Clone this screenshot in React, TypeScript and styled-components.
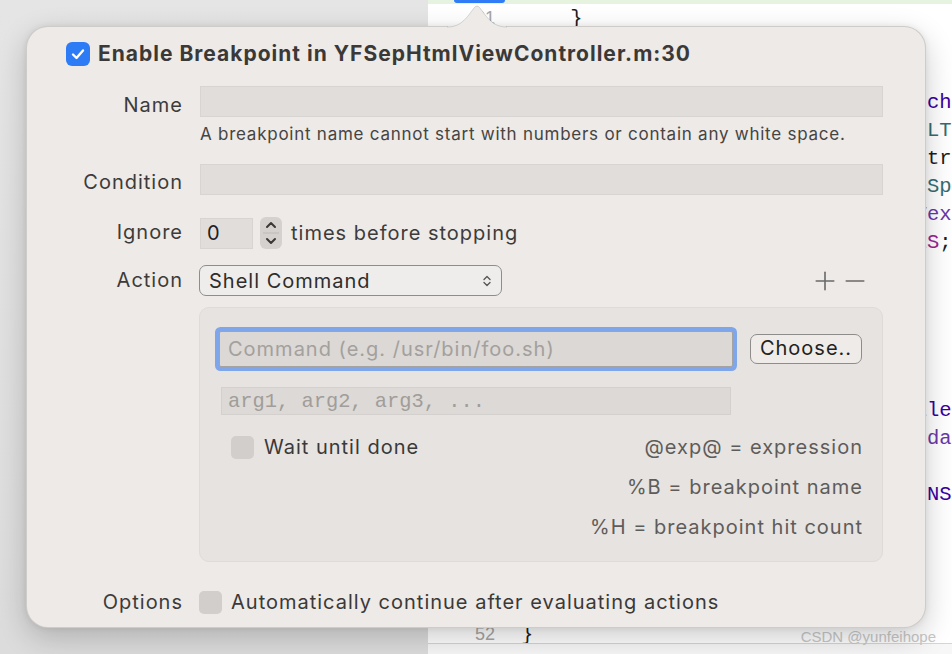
import React from 'react';
import styled, { createGlobalStyle } from 'styled-components';
import { Plus, Minus } from 'lucide-react';

const GlobalStyle = createGlobalStyle`
  html, body {
    margin: 0;
    padding: 0;
  }
  body {
    width: 952px;
    height: 654px;
    overflow: hidden;
    font-family: Inter, "Noto Sans", sans-serif;
  }
`;

const Screen = styled.div`
  position: relative;
  width: 952px;
  height: 654px;
  display: flex;
  overflow: hidden;
`;

const Sidebar = styled.div`
  width: 428px;
  flex-shrink: 0;
  background: linear-gradient(180deg, #e5e5e5 0%, #dcdcdc 100%);
`;

const Editor = styled.div`
  flex: 1;
  display: flex;
  flex-direction: column;
  background: #ffffff;
`;

const EditorBody = styled.div`
  height: 643px;
  overflow: hidden;
  flex-shrink: 0;
`;

const CurrentLine = styled.div`
  height: 4px;
  background: #e6f4df;
  display: flex;
  align-items: flex-start;
`;

const BreakpointMarker = styled.span`
  margin-left: 26px;
  width: 51px;
  height: 3px;
  background: #2f7cf6;
  border-radius: 0 0 4px 4px;
`;

const CodeRow = styled.div`
  display: grid;
  grid-template-columns: 67px 1fr;
  column-gap: 26px;
  height: 28px;
  align-items: center;
`;

const LineNo = styled.span`
  text-align: right;
  font-family: "Liberation Sans Narrow", "Liberation Sans", sans-serif;
  font-size: 18px;
  color: #a6a6a6;
`;

const Code = styled.span`
  font-family: "Liberation Mono", monospace;
  font-size: 20.5px;
  white-space: pre;
  color: #1d1d1d;
`;

const EditorFooter = styled.div`
  flex: 1;
  border-top: 1px solid #d6d6d6;
  background: #f7f7f7;
`;

const Watermark = styled.div`
  position: absolute;
  right: 16px;
  bottom: 9px;
  font-family: "Liberation Sans", sans-serif;
  font-size: 15px;
  color: #c8c8c8;
`;

/* popover */

const Popover = styled.div`
  position: absolute;
  left: 26px;
  top: 26px;
  width: 900px;
  height: 602px;
  box-sizing: border-box;
  background: #edeae7;
  border: 1px solid rgba(0, 0, 0, 0.13);
  border-radius: 22px;
  box-shadow: 0 10px 30px rgba(0, 0, 0, 0.2), 0 0 6px rgba(0, 0, 0, 0.08);
  color: #3d3b3a;
  letter-spacing: 1px;
`;

const Arrow = styled.svg`
  position: absolute;
  left: 420px;
  top: -24px;
`;

const Header = styled.div`
  display: flex;
  align-items: center;
  gap: 8px;
  padding: 15px 0 0 39px;
`;

const BlueCheck = styled.span`
  width: 24px;
  height: 24px;
  border-radius: 6px;
  background: #2d7cf6;
  display: flex;
  align-items: center;
  justify-content: center;
`;

const Title = styled.div`
  font-size: 21px;
  font-weight: 700;
  color: #3a3938;
  line-height: 24px;
  letter-spacing: 1px;
`;

const FieldRow = styled.div<{ $gap: number }>`
  display: flex;
  align-items: flex-start;
  margin-top: ${({ $gap }) => $gap}px;
`;

const Label = styled.div<{ $offset?: number; $lh?: number }>`
  width: 156px;
  flex-shrink: 0;
  margin-right: 17px;
  text-align: right;
  font-size: 20px;
  line-height: ${({ $lh }) => $lh || 31}px;
  padding-top: ${({ $offset }) => $offset || 0}px;
`;

const Control = styled.div`
  width: 683px;
  display: flex;
  flex-direction: column;
`;

const Inline = styled.div`
  display: flex;
  align-items: center;
`;

const TextBox = styled.div<{ $w?: number }>`
  box-sizing: border-box;
  width: ${({ $w }) => ($w ? `${$w}px` : '100%')};
  height: 31px;
  background: #e0dddb;
  border: 1px solid #d7d4d1;
  font-size: 20px;
  line-height: 29px;
  padding: 0 6px;
  color: #1f1f1f;
`;

const Hint = styled.div`
  margin-top: 6px;
  font-size: 17px;
  line-height: 22px;
  letter-spacing: 0.75px;
  color: #454443;
`;

const Stepper = styled.div`
  width: 22px;
  height: 32px;
  margin-left: 7px;
  border-radius: 6px;
  background: #d4d1ce;
  display: flex;
`;

const InlineText = styled.span<{ $ml: number }>`
  margin-left: ${({ $ml }) => $ml}px;
  font-size: 20px;
  line-height: 31px;
`;

const PopupButton = styled.div`
  box-sizing: border-box;
  width: 303px;
  height: 31px;
  margin-left: -1px;
  border: 1.5px solid #8f8d8b;
  border-radius: 7px;
  background: #efedeb;
  display: flex;
  align-items: center;
  justify-content: space-between;
  padding: 0 9px 0 9px;
  font-size: 20px;
  color: #2e2d2c;
`;

const PlusMinus = styled.div`
  margin-left: auto;
  margin-right: 13px;
  display: flex;
  color: #6a6a6a;
`;

const ActionPanel = styled.div`
  box-sizing: border-box;
  width: 684px;
  margin-top: 11px;
  margin-left: -1px;
  padding: 23px 20px 14px 19px;
  border: 1px solid #dedbd8;
  border-radius: 10px;
  background: #e6e3e0;
`;

const CommandField = styled.div`
  box-sizing: border-box;
  width: 514px;
  height: 36px;
  border: 1px solid #a5a3a1;
  border-radius: 2px;
  background: #dbd8d5;
  box-shadow: 0 0 0 4px #7fa6ea;
  padding: 0 8px;
  font-size: 20px;
  line-height: 34px;
  color: #a3a09d;
`;

const ChooseButton = styled.div`
  box-sizing: border-box;
  width: 112px;
  height: 30px;
  margin-left: 17px;
  border: 1.5px solid #8f8d8b;
  border-radius: 7px;
  background: #eeebe8;
  font-size: 20px;
  line-height: 27px;
  text-align: center;
  color: #222;
`;

const ArgsField = styled.div`
  box-sizing: border-box;
  width: 510px;
  height: 28px;
  margin: 20px 0 0 2px;
  border: 1px solid #d3d0cd;
  background: #dcd9d6;
  padding: 0 6px;
  font-family: "Liberation Mono", monospace;
  font-size: 20.4px;
  letter-spacing: 0;
  line-height: 27px;
  color: #a09d9a;
`;

const PanelFooter = styled.div`
  margin-top: 12px;
  display: flex;
  justify-content: space-between;
  align-items: flex-start;
`;

const CheckRow = styled.div<{ $ml: number; $h?: number }>`
  display: flex;
  align-items: center;
  height: ${({ $h }) => $h || 40}px;
  margin-left: ${({ $ml }) => $ml}px;
`;

const GrayCheck = styled.span`
  width: 23px;
  height: 23px;
  border-radius: 5px;
  background: #d1cecb;
  flex-shrink: 0;
`;

const CheckText = styled.span<{ $ml: number }>`
  margin-left: ${({ $ml }) => $ml}px;
  font-size: 20px;
  color: #3a3938;
`;

const Legend = styled.div`
  text-align: right;
  font-size: 20px;
  line-height: 40px;
  color: #5e5c5a;
  margin-right: -1px;
`;

type Seg = { t: string; c?: string };
type Line = { num?: string; segs?: Seg[] };

const PURPLE = '#3900a0';
const VIOLET = '#6c36a9';
const TEAL = '#326d74';
const PINK = '#9b2393';

// the visible tail of each line starts at column 33, just right of the popover edge
const at = (head: string, col: number, tail: Seg[]): Seg[] => [
  { t: head.padEnd(col).slice(0, col) },
  ...tail,
];

const lines: Line[] = [
  { num: '31', segs: [{ t: '    }' }] },
  {},
  {},
  { segs: at('  self.webView.scrollView.delaysTo', 32, [{ t: 'uchesBegan = NO;', c: PURPLE }]) },
  { segs: at('  [self.view setValue:@(WEBVIEW_F', 32, [{ t: 'ILTER_MODE)];', c: TEAL }]) },
  { segs: at('  NSString *html = [NSString', 32, [{ t: 'stringWithFormat:' }]) },
  { segs: at('  style.lineSpacing = kDefaultLin', 32, [{ t: 'eSpacing;', c: TEAL }]) },
  { segs: at('    self.label.textAlignment = NS', 32, [{ t: 'TextAlignmentCenter;', c: VIOLET }]) },
  { segs: at('     webView.allowsLinkPreview = ', 31, [{ t: 'YES', c: PINK }, { t: ';' }]) },
  {},
  {},
  {},
  {},
  {},
  { segs: at('  UIViewController *vc = [Contro', 32, [{ t: 'ller alloc];', c: PURPLE }]) },
  { segs: at('  NSData *bodyData = [self.html', 32, [{ t: ' dataUsingEncoding:', c: VIOLET }]) },
  {},
  { segs: at('                        encoding:', 32, [{ t: ' NSUTF8StringEncoding];', c: PURPLE }]) },
  {},
  {},
  {},
  {},
  { num: '52', segs: [{ t: '}' }] },
];

const Chevrons = () => (
  <svg width="10" height="16" viewBox="0 0 10 16">
    <path d="M2 6.5 L5 3.5 L8 6.5 M2 9.5 L5 12.5 L8 9.5" fill="none" stroke="#5a5856" strokeWidth="1.4" strokeLinecap="round" strokeLinejoin="round" />
  </svg>
);

const StepperIcon = () => (
  <svg width="22" height="32" viewBox="0 0 22 32">
    <path d="M7 10 L11 6 L15 10" fill="none" stroke="#3a3938" strokeWidth="2" strokeLinecap="round" strokeLinejoin="round" />
    <line x1="3" y1="16" x2="19" y2="16" stroke="#bdbab7" strokeWidth="1" />
    <path d="M7 22 L11 26 L15 22" fill="none" stroke="#3a3938" strokeWidth="2" strokeLinecap="round" strokeLinejoin="round" />
  </svg>
);

export default function App() {
  return (
    <Screen>
      <GlobalStyle />
      <Sidebar />
      <Editor>
        <EditorBody>
          <CurrentLine>
            <BreakpointMarker />
          </CurrentLine>
          {lines.map((line, i) => (
            <CodeRow key={i}>
              <LineNo>{line.num}</LineNo>
              <Code>
                {(line.segs || []).map((s, j) => (
                  <span key={j} style={s.c ? { color: s.c } : undefined}>
                    {s.t}
                  </span>
                ))}
              </Code>
            </CodeRow>
          ))}
        </EditorBody>
        <EditorFooter />
      </Editor>
      <Watermark>CSDN @yunfeihope</Watermark>

      <Popover>
        <Arrow width="60" height="26" viewBox="0 0 60 26">
          <path d="M0 24 C10 24 15 20 21 13 L27 5 Q30 1 33 5 L39 13 C45 20 50 24 60 24 Z" fill="#edeae7" />
          <rect x="1" y="23" width="58" height="3" fill="#edeae7" />
          <path d="M0 24 C10 24 15 20 21 13 L27 5 Q30 1 33 5 L39 13 C45 20 50 24 60 24" fill="none" stroke="rgba(0,0,0,0.13)" strokeWidth="1" />
        </Arrow>

        <Header>
          <BlueCheck>
            <svg width="16" height="16" viewBox="0 0 16 16">
              <path d="M3 8.5 L6.5 12 L13 4.5" fill="none" stroke="#fff" strokeWidth="2.4" strokeLinecap="round" strokeLinejoin="round" />
            </svg>
          </BlueCheck>
          <Title>Enable Breakpoint in YFSepHtmlViewController.m:30</Title>
        </Header>

        <FieldRow $gap={20}>
          <Label $offset={4}>Name</Label>
          <Control>
            <TextBox />
            <Hint>A breakpoint name cannot start with numbers or contain any white space.</Hint>
          </Control>
        </FieldRow>

        <FieldRow $gap={19}>
          <Label $offset={3}>Condition</Label>
          <Control>
            <TextBox />
          </Control>
        </FieldRow>

        <FieldRow $gap={19}>
          <Label>Ignore</Label>
          <Control>
            <Inline>
              <TextBox $w={53}>0</TextBox>
              <Stepper>
                <StepperIcon />
              </Stepper>
              <InlineText $ml={9}>times before stopping</InlineText>
            </Inline>
          </Control>
        </FieldRow>

        <FieldRow $gap={16}>
          <Label>Action</Label>
          <Control>
            <Inline>
              <PopupButton>
                <span>Shell Command</span>
                <Chevrons />
              </PopupButton>
              <PlusMinus>
                <Plus size={30} strokeWidth={1.3} />
                <Minus size={30} strokeWidth={1.3} />
              </PlusMinus>
            </Inline>
            <ActionPanel>
              <Inline>
                <CommandField>Command (e.g. /usr/bin/foo.sh)</CommandField>
                <ChooseButton>Choose..</ChooseButton>
              </Inline>
              <ArgsField>arg1, arg2, arg3, ...</ArgsField>
              <PanelFooter>
                <CheckRow $ml={12}>
                  <GrayCheck />
                  <CheckText $ml={10}>Wait until done</CheckText>
                </CheckRow>
                <Legend>
                  <div>@exp@ = expression</div>
                  <div>%B = breakpoint name</div>
                  <div>%H = breakpoint hit count</div>
                </Legend>
              </PanelFooter>
            </ActionPanel>
          </Control>
        </FieldRow>

        <FieldRow $gap={28}>
          <Label $lh={24}>Options</Label>
          <Control>
            <CheckRow $ml={-1} $h={24}>
              <GrayCheck />
              <CheckText $ml={9}>Automatically continue after evaluating actions</CheckText>
            </CheckRow>
          </Control>
        </FieldRow>
      </Popover>
    </Screen>
  );
}
